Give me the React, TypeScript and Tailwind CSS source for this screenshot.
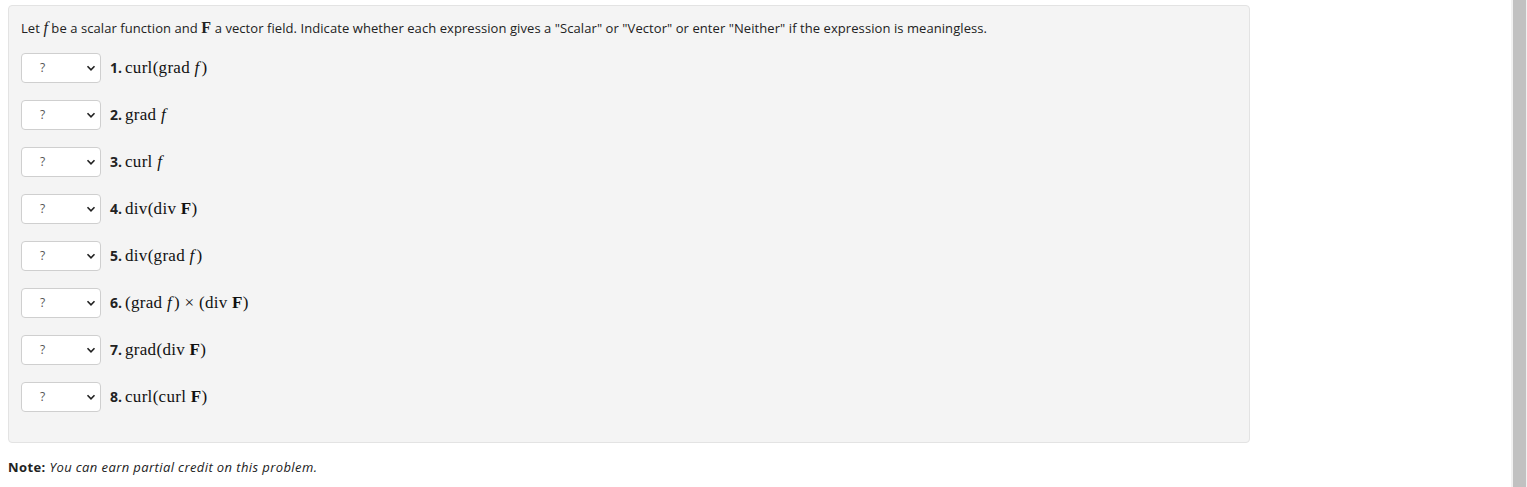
import React from 'react';

const sans = { fontFamily: '"Open Sans", "Liberation Sans", sans-serif' };
const serif = { fontFamily: '"Liberation Serif", "DejaVu Serif", serif' };

type Part = { t: string; k?: 'i' | 'b' };

const items: Part[][] = [
  [{ t: 'curl(grad ' }, { t: 'f', k: 'i' }, { t: ')' }],
  [{ t: 'grad ' }, { t: 'f', k: 'i' }],
  [{ t: 'curl ' }, { t: 'f', k: 'i' }],
  [{ t: 'div(div ' }, { t: 'F', k: 'b' }, { t: ')' }],
  [{ t: 'div(grad ' }, { t: 'f', k: 'i' }, { t: ')' }],
  [{ t: '(grad ' }, { t: 'f', k: 'i' }, { t: ') × (div ' }, { t: 'F', k: 'b' }, { t: ')' }],
  [{ t: 'grad(div ' }, { t: 'F', k: 'b' }, { t: ')' }],
  [{ t: 'curl(curl ' }, { t: 'F', k: 'b' }, { t: ')' }],
];

const Math: React.FC<{ parts: Part[] }> = ({ parts }) => (
  <span className="text-[17px] tracking-[0.3px] text-[#111]" style={serif}>
    {parts.map((p, i) => (
      <span key={i} className={p.k === 'i' ? 'italic pr-[2px]' : p.k === 'b' ? 'font-bold' : ''}>
        {p.t}
      </span>
    ))}
  </span>
);

const FakeSelect = () => (
  <div className="flex h-[30px] w-[80px] shrink-0 items-center justify-between rounded-[4px] border border-[#cfcfcf] bg-white pl-[18px] pr-[4px]">
    <span className="text-[12px] text-[#555]" style={sans}>?</span>
    <svg width="10" height="10" viewBox="0 0 10 10">
      <path d="M1.5 3.2 L5 6.8 L8.5 3.2" fill="none" stroke="#222" strokeWidth="1.6" />
    </svg>
  </div>
);

export default function App() {
  return (
    <div className="flex h-[487px] w-full bg-white" style={sans}>
      <div className="flex-1 pl-[8px] pt-[5px]">
        <div className="w-[1242px] rounded-[4px] border border-[#e3e3e3] bg-[#f4f4f4] pb-[30px] pl-[12px] pt-[12px]">
          <p className="text-[13px] leading-[20px] tracking-[0.07px] text-[#222]">
            Let <span className="italic text-[16px]" style={serif}>f</span> be a scalar function and{' '}
            <span className="font-bold text-[16px]" style={serif}>F</span> a vector field. Indicate whether each expression gives a "Scalar" or "Vector" or enter "Neither" if the expression is meaningless.
          </p>
          <div className="mt-[15px] flex flex-col gap-[17px]">
            {items.map((parts, i) => (
              <div key={i} className="flex items-center gap-[9px]">
                <FakeSelect />
                <div className="flex items-baseline gap-[3px]">
                  <span className="text-[14px] font-bold text-[#222]">{i + 1}.</span>
                  <Math parts={parts} />
                </div>
              </div>
            ))}
          </div>
        </div>
        <p className="mt-[15px] text-[13px] tracking-[0.4px] text-[#222]">
          <span className="font-bold">Note:</span> <span className="italic">You can earn partial credit on this problem.</span>
        </p>
      </div>
      <div className="flex h-full w-[16px] shrink-0 justify-center bg-[#f1f1f1]">
        <div className="h-full w-[13px] bg-[#c1c1c1]" />
      </div>
    </div>
  );
}
